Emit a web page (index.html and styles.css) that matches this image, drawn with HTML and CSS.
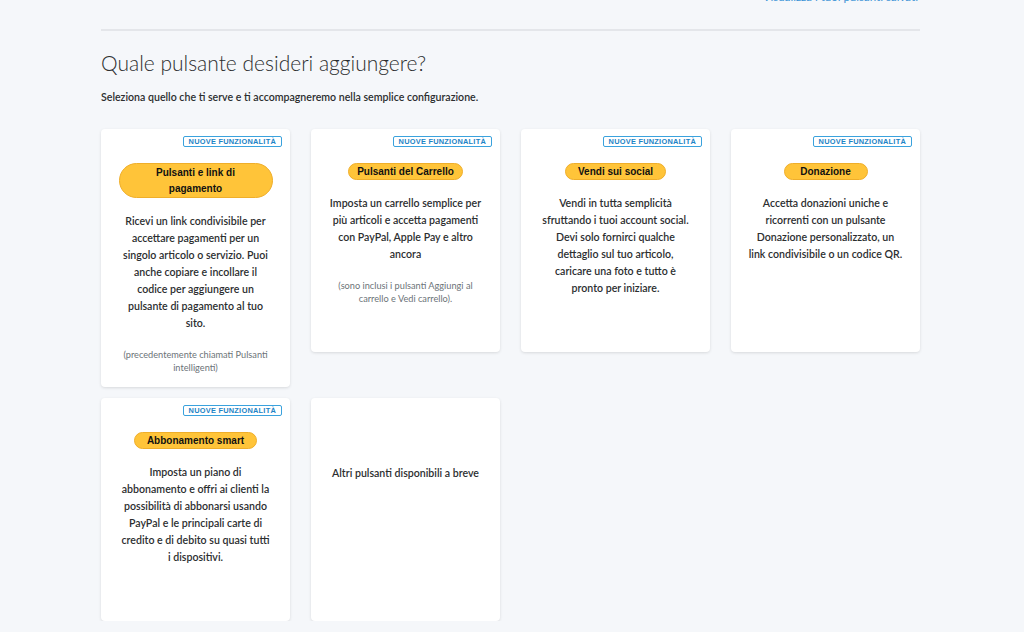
FILE: index.html
```html
<!DOCTYPE html>
<html lang="it">
<head>
<meta charset="utf-8">
<title>Pulsanti PayPal</title>
<link rel="stylesheet" href="styles.css">
</head>
<body>
<div class="page">
  <div class="topbar">
    <a class="saved-link" href="#">Visualizza i tuoi pulsanti salvati</a>
  </div>
  <hr class="divider">
  <h1 class="title">Quale pulsante desideri aggiungere?</h1>
  <p class="subtitle">Seleziona quello che ti serve e ti accompagneremo nella semplice configurazione.</p>

  <div class="grid">
    <div class="card">
      <div class="badge-row"><span class="badge">Nuove funzionalità</span></div>
      <div class="btn-row"><span class="pill pill-wide">Pulsanti e link di pagamento</span></div>
      <p class="desc">Ricevi un link condivisibile per<br>accettare pagamenti per un<br>singolo articolo o servizio. Puoi<br>anche copiare e incollare il<br>codice per aggiungere un<br>pulsante di pagamento al tuo<br>sito.</p>
      <p class="note">(precedentemente chiamati Pulsanti<br>intelligenti)</p>
    </div>

    <div class="card">
      <div class="badge-row"><span class="badge">Nuove funzionalità</span></div>
      <div class="btn-row"><span class="pill pill-tight">Pulsanti del Carrello</span></div>
      <p class="desc">Imposta un carrello semplice per<br>più articoli e accetta pagamenti<br>con PayPal, Apple Pay e altro<br>ancora</p>
      <p class="note">(sono inclusi i pulsanti Aggiungi al<br>carrello e Vedi carrello).</p>
    </div>

    <div class="card">
      <div class="badge-row"><span class="badge">Nuove funzionalità</span></div>
      <div class="btn-row"><span class="pill">Vendi sui social</span></div>
      <p class="desc">Vendi in tutta semplicità<br>sfruttando i tuoi account social.<br>Devi solo fornirci qualche<br>dettaglio sul tuo articolo,<br>caricare una foto e tutto è<br>pronto per iniziare.</p>
    </div>

    <div class="card">
      <div class="badge-row"><span class="badge">Nuove funzionalità</span></div>
      <div class="btn-row"><span class="pill">Donazione</span></div>
      <p class="desc">Accetta donazioni uniche e<br>ricorrenti con un pulsante<br>Donazione personalizzato, un<br>link condivisibile o un codice QR.</p>
    </div>

    <div class="card">
      <div class="badge-row"><span class="badge">Nuove funzionalità</span></div>
      <div class="btn-row"><span class="pill">Abbonamento smart</span></div>
      <p class="desc">Imposta un piano di<br>abbonamento e offri ai clienti la<br>possibilità di abbonarsi usando<br>PayPal e le principali carte di<br>credito e di debito su quasi tutti<br>i dispositivi.</p>
    </div>

    <div class="card card-soon">
      <p class="soon">Altri pulsanti disponibili a breve</p>
    </div>
  </div>
</div>
</body>
</html>
```

FILE: styles.css
```css
html, body {
  margin: 0;
  padding: 0;
  background: #f5f7fa;
}

body {
  font-family: Lato, "Noto Sans", "Liberation Sans", sans-serif;
  color: #2c2e2f;
}

.page {
  width: 819px;
  margin-left: 101px;
}

/* link row scrolled mostly out of view above the divider */
.topbar {
  display: flex;
  justify-content: flex-end;
  height: 12px;
  margin-top: -9px;
}

.saved-link {
  font-size: 11.5px;
  line-height: 12px;
  color: #3b93d6;
  text-decoration: none;
  margin-right: 2px;
}

.divider {
  margin: 26px 0 0;
  border: 0;
  height: 2px;
  background: #e4e6ea;
}

.title {
  margin: 18px 0 0;
  font-size: 21px;
  line-height: 28px;
  font-weight: 300;
  color: #2c2e2f;
}

.subtitle {
  margin: 12px 0 0;
  font-size: 10.6px;
  line-height: 16px;
  font-weight: 600;
  color: #2c2e2f;
}

.grid {
  margin-top: 24px;
  display: grid;
  grid-template-columns: repeat(4, 189px);
  column-gap: 21px;
  row-gap: 11px;
  align-items: start;
}

.card {
  background: #fff;
  border-radius: 4px;
  box-shadow: 0 1px 3px rgba(0, 0, 0, 0.12);
  min-height: 223px;
  box-sizing: border-box;
  padding: 7px 8px 13px;
}

.badge-row {
  display: flex;
  justify-content: flex-end;
}

.badge {
  display: inline-block;
  border: 1px solid #3aa2dd;
  border-radius: 2px;
  padding: 0 5px;
  height: 9px;
  line-height: 9px;
  font-family: "Liberation Sans", Arial, sans-serif;
  font-size: 7.4px;
  letter-spacing: 0.25px;
  font-weight: 700;
  text-transform: uppercase;
  color: #1d84c6;
}

.btn-row {
  display: flex;
  justify-content: center;
  margin-top: 16px;
}

.pill {
  display: inline-block;
  box-sizing: border-box;
  min-width: 84px;
  background: #ffc439;
  border: 1px solid #efae2a;
  border-radius: 20px;
  padding: 0 12px;
  font-family: "Liberation Sans", Arial, sans-serif;
  font-size: 10px;
  font-weight: 700;
  line-height: 15px;
  color: #111;
  text-align: center;
}

.pill-tight {
  padding: 0 8px;
}

.pill-wide {
  width: 154px;
  padding: 1px 26px;
  line-height: 15.5px;
}

.desc {
  margin: 15px 0 0;
  font-size: 10.6px;
  line-height: 17px;
  font-weight: 600;
  text-align: center;
  color: #2c2e2f;
}

.note {
  margin: 16px 0 0;
  font-size: 9.2px;
  line-height: 13px;
  text-align: center;
  color: #6c7378;
}

.card-soon {
  padding-top: 67px;
}

.soon {
  margin: 0;
  font-size: 10.6px;
  line-height: 17px;
  font-weight: 600;
  text-align: center;
}
```
